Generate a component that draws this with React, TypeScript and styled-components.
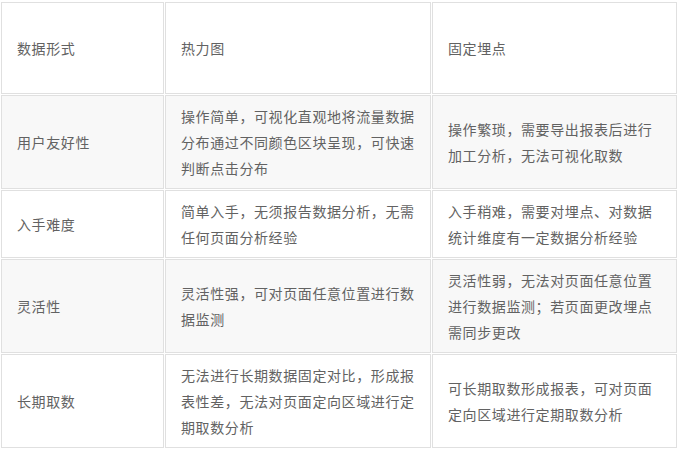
import React from 'react'
import styled, { createGlobalStyle } from 'styled-components'

const GlobalStyle = createGlobalStyle`
  html, body {
    margin: 0;
    padding: 0;
    background: #fff;
  }
  body {
    font-family: 'Noto Sans CJK SC', 'Noto Sans', sans-serif;
  }
`

interface Row {
  label: string
  heat: string[]
  fixed: string[]
}

const rows: Row[] = [
  { label: '数据形式', heat: ['热力图'], fixed: ['固定埋点'] },
  {
    label: '用户友好性',
    heat: ['操作简单，可视化直观地将流量数据', '分布通过不同颜色区块呈现，可快速', '判断点击分布'],
    fixed: ['操作繁琐，需要导出报表后进行', '加工分析，无法可视化取数'],
  },
  {
    label: '入手难度',
    heat: ['简单入手，无须报告数据分析，无需', '任何页面分析经验'],
    fixed: ['入手稍难，需要对埋点、对数据', '统计维度有一定数据分析经验'],
  },
  {
    label: '灵活性',
    heat: ['灵活性强，可对页面任意位置进行数', '据监测'],
    fixed: ['灵活性弱，无法对页面任意位置', '进行数据监测；若页面更改埋点', '需同步更改'],
  },
  {
    label: '长期取数',
    heat: ['无法进行长期数据固定对比，形成报', '表性差，无法对页面定向区域进行定', '期取数分析'],
    fixed: ['可长期取数形成报表，可对页面', '定向区域进行定期取数分析'],
  },
]

const Page = styled.div`
  padding-top: 1px;
`

const Table = styled.table`
  width: 678px;
  table-layout: fixed;
  border-collapse: separate;
  border-spacing: 1px;
  color: #626262;
  font-size: 14px;
  letter-spacing: 0.6px;
`

const TableRow = styled.tr<{ $shaded: boolean }>`
  background: ${({ $shaded }) => ($shaded ? '#f8f8f8' : '#fff')};
`

const Cell = styled.td<{ $tall?: boolean }>`
  border: 1px solid #e0e0e0;
  padding: 7px 15px;
  line-height: 26px;
  vertical-align: middle;
  box-sizing: border-box;
  height: ${({ $tall }) => ($tall ? '92px' : 'auto')};
`

const Line = styled.span`
  display: block;
  white-space: nowrap;
`

const Lines = ({ items }: { items: string[] }) => (
  <>
    {items.map((t, i) => (
      <Line key={i}>{t}</Line>
    ))}
  </>
)

export default function App() {
  return (
    <Page>
      <GlobalStyle />
      <Table>
        <colgroup>
          <col style={{ width: 163 }} />
          <col style={{ width: 266 }} />
          <col style={{ width: 245 }} />
        </colgroup>
        <tbody>
          {rows.map((r, i) => (
            <TableRow key={r.label} $shaded={i % 2 === 1}>
              <Cell $tall={i === 0}>{r.label}</Cell>
              <Cell $tall={i === 0}>
                <Lines items={r.heat} />
              </Cell>
              <Cell $tall={i === 0}>
                <Lines items={r.fixed} />
              </Cell>
            </TableRow>
          ))}
        </tbody>
      </Table>
    </Page>
  )
}
